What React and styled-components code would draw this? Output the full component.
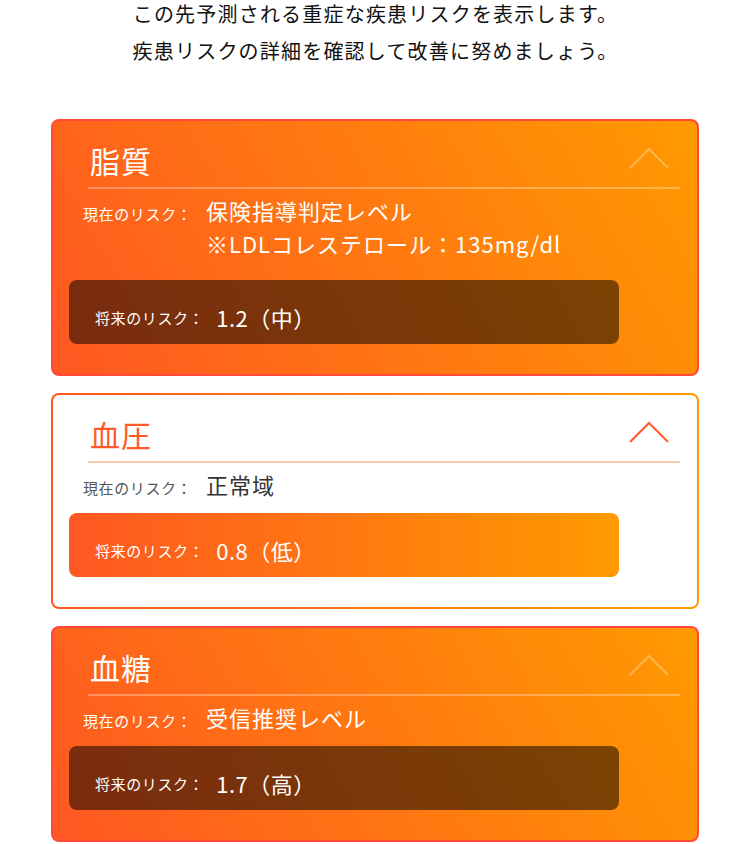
import styled, { createGlobalStyle, css } from 'styled-components'

const GlobalStyle = createGlobalStyle`
  body {
    margin: 0;
    background: #fff;
    font-family: "Noto Sans CJK JP", "Noto Sans", sans-serif;
  }
`

const GRAD = 'linear-gradient(60deg, #ff5722 0%, #ff9a00 100%)'
const BAR_GRAD = 'linear-gradient(90deg, #ff5722 0%, #ff9a00 100%)'

const Page = styled.div`
  width: 751px;
  padding: 0 0 20px;
`

const Intro = styled.div`
  text-align: center;
  color: #111;
  font-size: 20px;
  line-height: 37px;
  letter-spacing: 1.2px;
  margin-top: -5px;
`

const List = styled.div`
  margin: 50px 52px 0 51px;
  display: flex;
  flex-direction: column;
  gap: 17px;
`

const Card = styled.section`
  border-radius: 8px;
  border: 2px solid transparent;
  padding: 0 16px 30px;
  ${({ $filled }) =>
    $filled
      ? css`
          background: ${GRAD} padding-box, linear-gradient(#ff4a3a, #ff4a3a) border-box;
          color: #fff;
        `
      : css`
          background: linear-gradient(#fff, #fff) padding-box, ${BAR_GRAD} border-box;
          color: #333;
        `}
`

const Header = styled.div`
  display: flex;
  align-items: center;
  justify-content: space-between;
  margin: 0 1px 0 19px;
  padding: 16px 11px 3px 2px;
  border-bottom: 2px solid ${({ $filled }) => ($filled ? 'rgba(255,255,255,0.3)' : '#ffc9b8')};
`

const Title = styled.h2`
  margin: 0;
  font-size: 30px;
  font-weight: 400;
  line-height: 47px;
  letter-spacing: 1px;
  color: ${({ $filled }) => ($filled ? '#fff' : '#ff5a2a')};
`

const Chevron = styled.svg`
  width: 40px;
  height: 22px;
  margin-top: -6px;
`

const Current = styled.div`
  display: flex;
  align-items: baseline;
  margin: 6px 0 0 14px;
  line-height: 30px;
`

const Label = styled.span`
  font-size: 15px;
  letter-spacing: 0.6px;
  width: 123px;
  flex: none;
  color: ${({ $filled }) => ($filled ? '#fff' : '#555')};
`

const Values = styled.div`
  display: flex;
  flex-direction: column;
`

const Value = styled.span`
  font-size: 22px;
  letter-spacing: 1px;
  line-height: ${({ $note }) => ($note ? '36px' : '30px')};
  color: ${({ $filled }) => ($filled ? '#fff' : '#333')};
`

const FutureBar = styled.div`
  box-sizing: border-box;
  width: 550px;
  height: 64px;
  margin-top: ${({ $extra }) => ($extra ? '19px' : '10px')};
  border-radius: 8px;
  padding: 10px 0 0 26px;
  display: flex;
  align-items: center;
  color: #fff;
  background: ${({ $filled }) => ($filled ? 'rgba(0,0,0,0.52)' : BAR_GRAD)};
`

const FutureLabel = styled.span`
  font-size: 15px;
  letter-spacing: 0.6px;
  margin-right: 12px;
`

const FutureValue = styled.span`
  font-size: 22px;
  letter-spacing: 0.5px;
`

const items = [
  {
    title: '脂質',
    filled: true,
    current: '保険指導判定レベル',
    note: '※LDLコレステロール：135mg/dl',
    future: '1.2（中）',
  },
  { title: '血圧', filled: false, current: '正常域', future: '0.8（低）' },
  { title: '血糖', filled: true, current: '受信推奨レベル', future: '1.7（高）' },
]

function RiskCard({ item }) {
  const f = item.filled
  return (
    <Card $filled={f}>
      <Header $filled={f}>
        <Title $filled={f}>{item.title}</Title>
        <Chevron viewBox="0 0 40 22">
          <polyline
            points="1,21 20,2 39,21"
            fill="none"
            stroke={f ? 'rgba(255,255,255,0.3)' : '#ff5a2a'}
            strokeWidth="2"
          />
        </Chevron>
      </Header>
      <Current>
        <Label $filled={f}>現在のリスク：</Label>
        <Values>
          <Value $filled={f}>{item.current}</Value>
          {item.note && (
            <Value $filled={f} $note>
              {item.note}
            </Value>
          )}
        </Values>
      </Current>
      <FutureBar $filled={f} $extra={!!item.note}>
        <FutureLabel>将来のリスク：</FutureLabel>
        <FutureValue>{item.future}</FutureValue>
      </FutureBar>
    </Card>
  )
}

export default function App() {
  return (
    <Page>
      <GlobalStyle />
      <Intro>
        この先予測される重症な疾患リスクを表示します。
        <br />
        疾患リスクの詳細を確認して改善に努めましょう。
      </Intro>
      <List>
        {items.map((it) => (
          <RiskCard key={it.title} item={it} />
        ))}
      </List>
    </Page>
  )
}
